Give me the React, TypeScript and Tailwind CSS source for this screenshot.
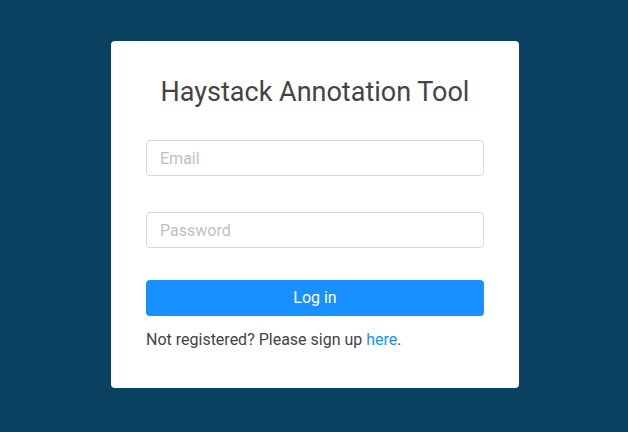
import React, { useState } from 'react';

export default function App() {
  const [email, setEmail] = useState('');
  const [password, setPassword] = useState('');

  const inputCls =
    'w-full h-9 rounded border border-[#d9d9d9] bg-white px-[13px] text-base text-[#444] placeholder:text-[#bfbfbf] focus:outline-none focus:border-[#40a9ff]';

  return (
    <div
      className="flex min-h-[432px] w-full items-start justify-center bg-[#0a4160] pt-[41px] pl-[2px]"
      style={{ fontFamily: 'Roboto, "Liberation Sans", sans-serif' }}
    >
      <div className="w-[408px] rounded bg-white px-[35px] pt-[30px] pb-9">
        <h1 className="text-center text-[27px] leading-[42px] text-[#444]">Haystack Annotation Tool</h1>

        <form onSubmit={e => e.preventDefault()} className="mt-[27px] flex flex-col">
          <input
            className={inputCls}
            placeholder="Email"
            value={email}
            onChange={e => setEmail(e.target.value)}
          />
          <input
            type="password"
            className={`${inputCls} mt-9`}
            placeholder="Password"
            value={password}
            onChange={e => setPassword(e.target.value)}
          />
          <button
            type="submit"
            className="mt-8 h-9 w-full rounded bg-[#1890ff] text-base text-white hover:bg-[#40a9ff]"
          >
            Log in
          </button>
        </form>

        <p className="mt-3 text-base leading-6 text-[#444]">
          Not registered? Please sign up <a href="#" className="text-[#1890ff]">here</a>.
        </p>
      </div>
    </div>
  );
}
